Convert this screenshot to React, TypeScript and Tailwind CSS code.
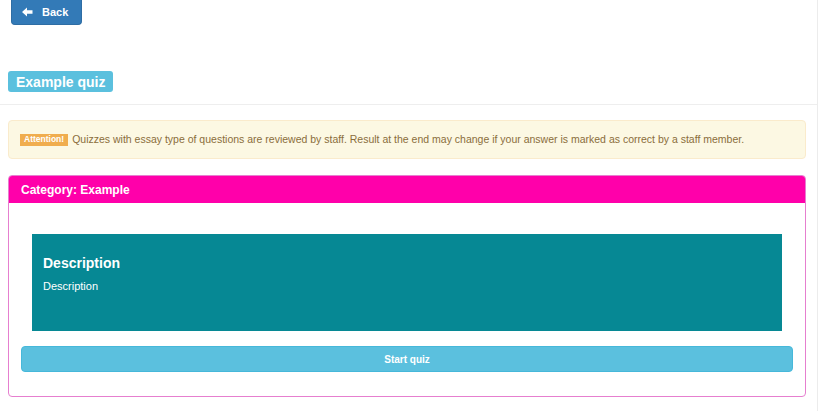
import React from "react";

function ArrowLeft() {
  return (
    <svg width="11" height="10" viewBox="0 0 11 10" className="fill-white">
      <path d="M0 5 L5 0.5 L5 3.3 L10.5 3.3 L10.5 6.7 L5 6.7 L5 9.5 Z" />
    </svg>
  );
}

export default function App() {
  return (
    <div className="w-[818px] h-[411px] border-r border-[#ececec] bg-white [font-family:'Liberation_Sans',Arial,sans-serif]">
      <div className="flex pl-[11px]">
        <button className="flex items-center gap-[9px] w-[71px] h-[25px] pl-[10px] bg-[#337ab7] border border-[#2e6da4] border-t-0 rounded-b-[4px] text-white text-[11px] font-bold">
          <ArrowLeft />
          Back
        </button>
      </div>

      <div className="flex pl-[8px] mt-[46px]">
        <span className="flex items-center h-[21px] px-[8px] rounded-[3px] bg-[#5bc0de] text-white text-[14px] font-bold leading-none">
          Example quiz
        </span>
      </div>

      <div className="mt-[12px] border-t border-[#eeeeee]" />

      <div className="mx-[8px] w-[798px] mt-[15px] h-[39px] flex items-center px-[11px] bg-[#fcf8e3] border border-[#faebcc] rounded-[4px] text-[10.5px] text-[#8a6d3b]">
        <span className="inline-flex items-center h-[12px] px-[4px] mr-[4px] bg-[#f0ad4e] text-white text-[8.5px] font-bold leading-none">
          Attention!
        </span>
        Quizzes with essay type of questions are reviewed by staff. Result at the end may change if your answer is marked as correct by a staff member.
      </div>

      <div className="mx-[8px] w-[798px] mt-[16px] h-[222px] border border-[#e67fcf] rounded-[4px] overflow-hidden">
        <div className="h-[27px] flex items-center px-[12px] bg-[#ff00aa] text-white text-[12px] font-bold">
          Category: Example
        </div>
        <div className="px-[12px] pt-[31px]">
          <div className="mx-[11px] h-[97px] bg-[#068894] px-[11px] pt-[21px] text-white">
            <div className="text-[14px] font-bold leading-[16px]">Description</div>
            <div className="mt-[9px] text-[11px] leading-[13px]">Description</div>
          </div>
          <button className="mt-[15px] w-full h-[26px] flex items-center justify-center bg-[#5bc0de] border border-[#46b8da] rounded-[4px] text-white text-[10px] font-bold">
            Start quiz
          </button>
        </div>
      </div>
    </div>
  );
}
